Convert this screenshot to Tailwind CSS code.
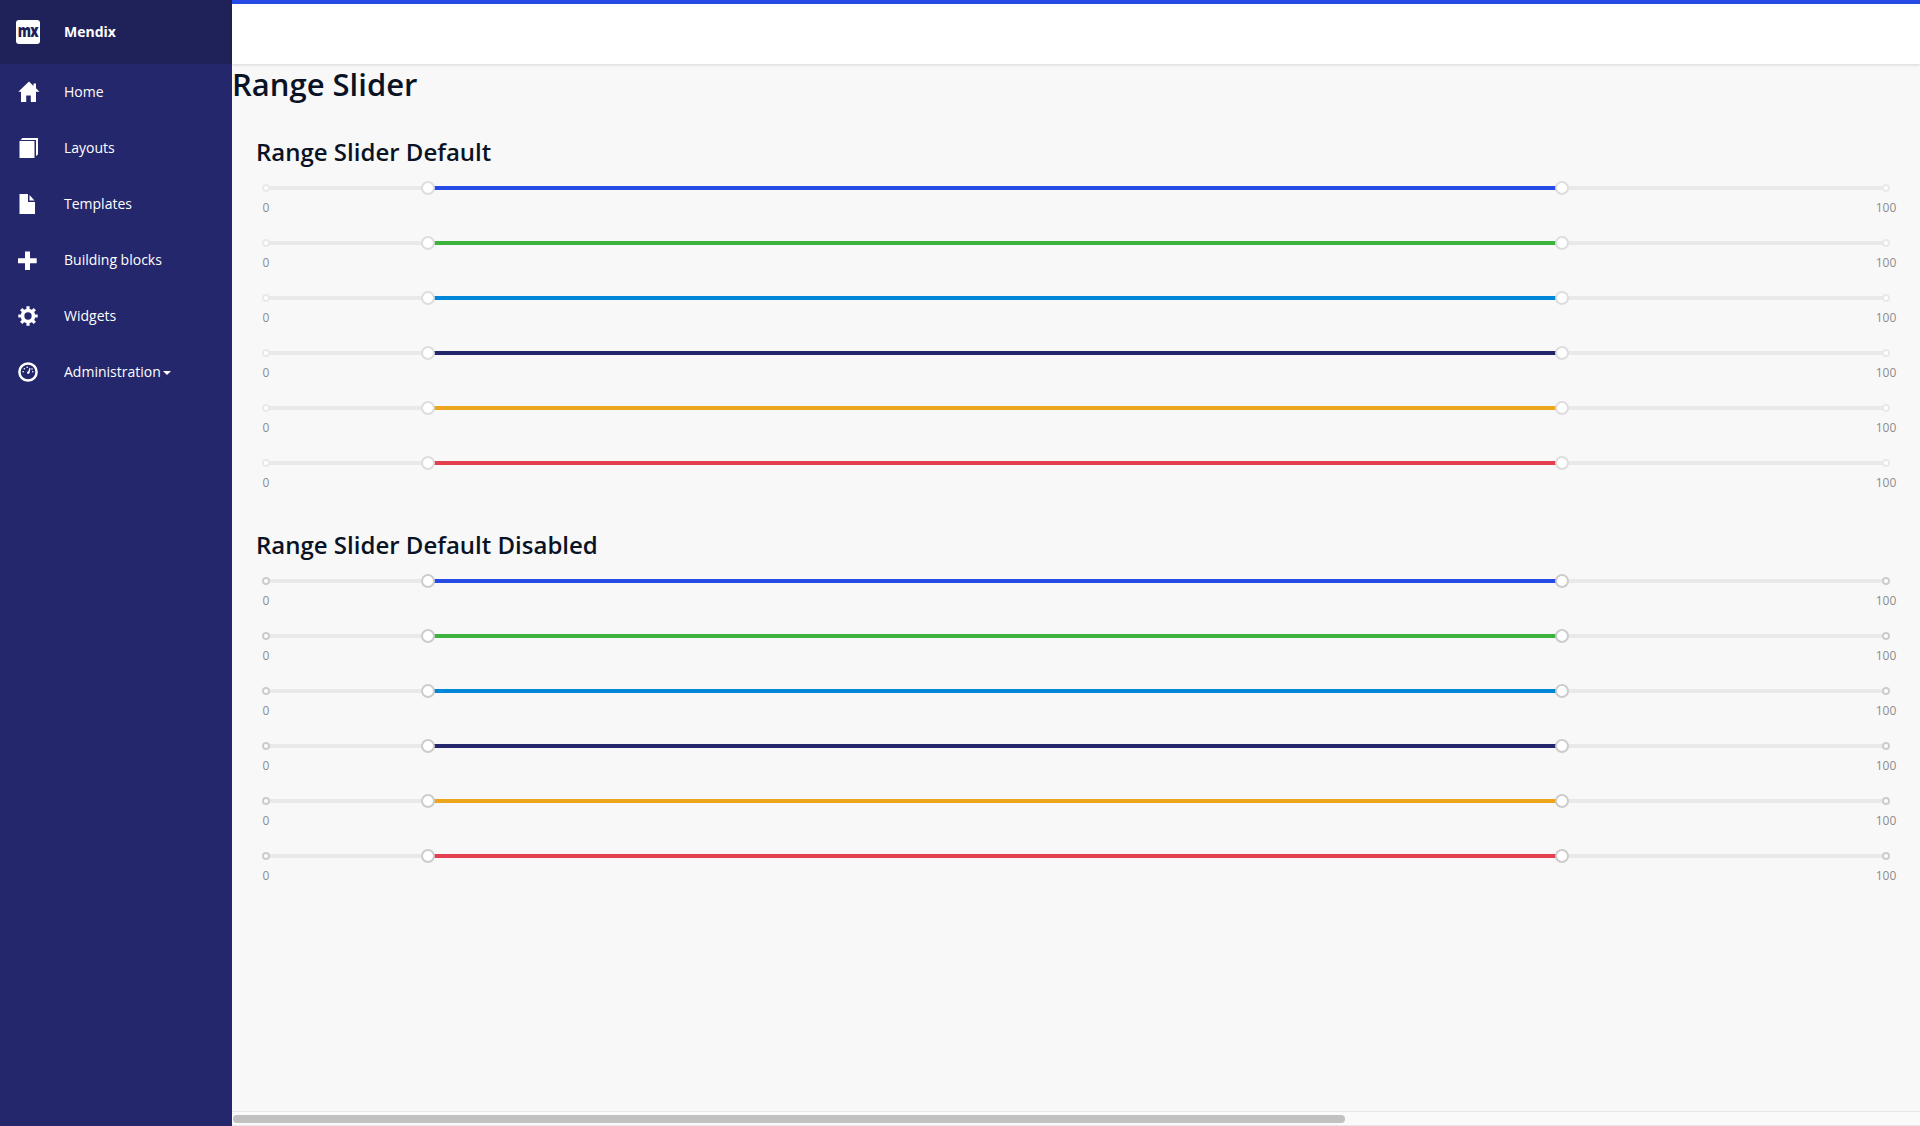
<!DOCTYPE html>
<html lang="en">
<head>
<meta charset="utf-8">
<title>Range Slider</title>
<script src="https://cdn.jsdelivr.net/npm/@tailwindcss/browser@4"></script>
</head>
<body class="flex h-screen overflow-hidden bg-[#f8f8f8] font-['Open_Sans',sans-serif] text-[#0a1325] antialiased">
<aside class="flex w-[232px] shrink-0 flex-col bg-[#24276c] text-sm text-white">
  <div class="flex h-16 items-center bg-[#1f2159] pl-4 font-bold">
    <div class="flex size-6 items-center justify-center rounded-[3px] bg-white"><span class="-mt-[3px] scale-x-[0.78] text-[17px] leading-none font-extrabold tracking-[-1px] text-[#1f2159]">mx</span></div>
    <span class="pl-6">Mendix</span>
  </div>
  <nav>
    <a class="flex h-14 items-center pl-[18px]"><svg class="mr-[24px] h-[22px] w-[22px]" viewBox="0 0 22 22" fill="currentColor"><path d="M11 .5 .3 10.700H3v10.300h5.200v-6.500h4.600v6.500H18V10.700h3.500L18 7.300V2.500h-2.500v2.500Z"/></svg><span>Home</span></a>
    <a class="flex h-14 items-center pl-[18px]"><svg class="mr-[24px] h-[22px] w-[22px]" viewBox="0 0 22 22" fill="currentColor"><path d="M1.500 4h15v17h-15zM2.500 3l2-2H20v16.500l-2 1.500V3z"/></svg><span>Layouts</span></a>
    <a class="flex h-14 items-center pl-[18px]"><svg class="mr-[24px] h-[22px] w-[22px]" viewBox="0 0 22 22" fill="currentColor"><path d="M1.500 1H10v8h7v12H1.500zM11.500 2l5 5.500h-5z"/></svg><span>Templates</span></a>
    <a class="flex h-14 items-center pl-[18px]"><svg class="mr-[24px] h-[22px] w-[22px]" viewBox="0 0 22 22" fill="currentColor"><path d="M7 2.500h5v6.700h6.700v5H12V21H7v-6.800H0v-5h7z"/></svg><span>Building blocks</span></a>
    <a class="flex h-14 items-center pl-[18px]"><svg class="mr-[24px] h-[22px] w-[22px]" viewBox="0 0 22 22"><g fill="none" stroke="currentColor"><circle cx="10" cy="11" r="5.500" stroke-width="3.700"/><path stroke-width="3.200" d="M10 1.300v3M10 17.700v3M.3 11h3M16.700 11h3M3.200 4.200l2 2M14.800 15.800l2 2M3.200 17.800l2-2M14.800 6.200l2-2"/></g></svg><span>Widgets</span></a>
    <a class="flex h-14 items-center pl-[18px]"><svg class="mr-[24px] h-[22px] w-[22px]" viewBox="0 0 22 22"><circle cx="10" cy="11" r="8.600" fill="none" stroke="currentColor" stroke-width="2.500"/><g fill="currentColor"><circle cx="5.200" cy="10.800" r=".8"/><circle cx="6.400" cy="7.700" r=".8"/><circle cx="9.200" cy="6.300" r=".8"/><circle cx="14" cy="8" r=".8"/><circle cx="14.800" cy="10.800" r=".8"/><path d="M11.500 6.800l1 .4-1 4.800c-.4 1.400-2.600 1-2.500-.4.200-.8.800-1.100 1.400-1.300z"/></g></svg><span>Administration</span><span class="mt-px ml-0.5 border-x-4 border-t-4 border-x-transparent border-t-white"></span></a>
  </nav>
</aside>
<div class="flex min-w-0 grow flex-col">
  <header class="h-16 shrink-0 border-t-4 border-[#264ae5] bg-white shadow-[0_1px_3px_rgba(0,0,0,0.14)]"></header>
  <main class="grow">
    <h1 class="h-[69px] text-[31px] leading-[40px] font-semibold">Range Slider</h1>
    <div id="groups" class="px-6"></div>
  </main>
  <div class="flex h-[15px] shrink-0 items-center border-y border-[#e8e8e8] bg-[#fafafa] pl-px"><div class="h-2 w-[1112px] rounded-full bg-[#c1c1c1]"></div></div>
</div>
<script>
  const colors = ['bg-[#264ae5]', 'bg-[#3cb33d]', 'bg-[#0086d9]', 'bg-[#24276c]', 'bg-[#eca51c]', 'bg-[#e33f4e]'];
  const group = (title, dot, handle) => `
    <section class="h-[393px]">
      <h2 class="h-[48px] pt-[3px] text-2xl leading-[32px] font-semibold">${title}</h2>
      ${colors.map(c => `
      <div class="h-[55px] px-[10px] pt-[5px]">
        <div class="relative h-1 rounded-full bg-[#e9e9e9]">
          <div class="absolute left-[10%] h-1 w-[70%] ${c}"></div>
          <i class="absolute -top-0.5 -left-1 size-2 rounded-full border-2 bg-white ${dot}"></i>
          <i class="absolute -top-0.5 -right-1 size-2 rounded-full border-2 bg-white ${dot}"></i>
          <i class="absolute -top-[5px] left-[10%] -ml-[7px] size-3.5 rounded-full border-2 bg-white ${handle}"></i>
          <i class="absolute -top-[5px] left-[80%] -ml-[7px] size-3.5 rounded-full border-2 bg-white ${handle}"></i>
        </div>
        <div class="-mx-[10px] flex justify-between pt-[9px] text-xs leading-[18px] text-[#8c8c8c]"><span class="w-5 text-center">0</span><span class="flex w-5 justify-center">100</span></div>
      </div>`).join('')}
    </section>`;
  document.getElementById('groups').innerHTML =
    group('Range Slider Default', 'border-[#e9e9e9]', 'border-[#dddddd]') +
    group('Range Slider Default Disabled', 'border-[#cccccc]', 'border-[#cccccc]');
</script>
</body>
</html>
